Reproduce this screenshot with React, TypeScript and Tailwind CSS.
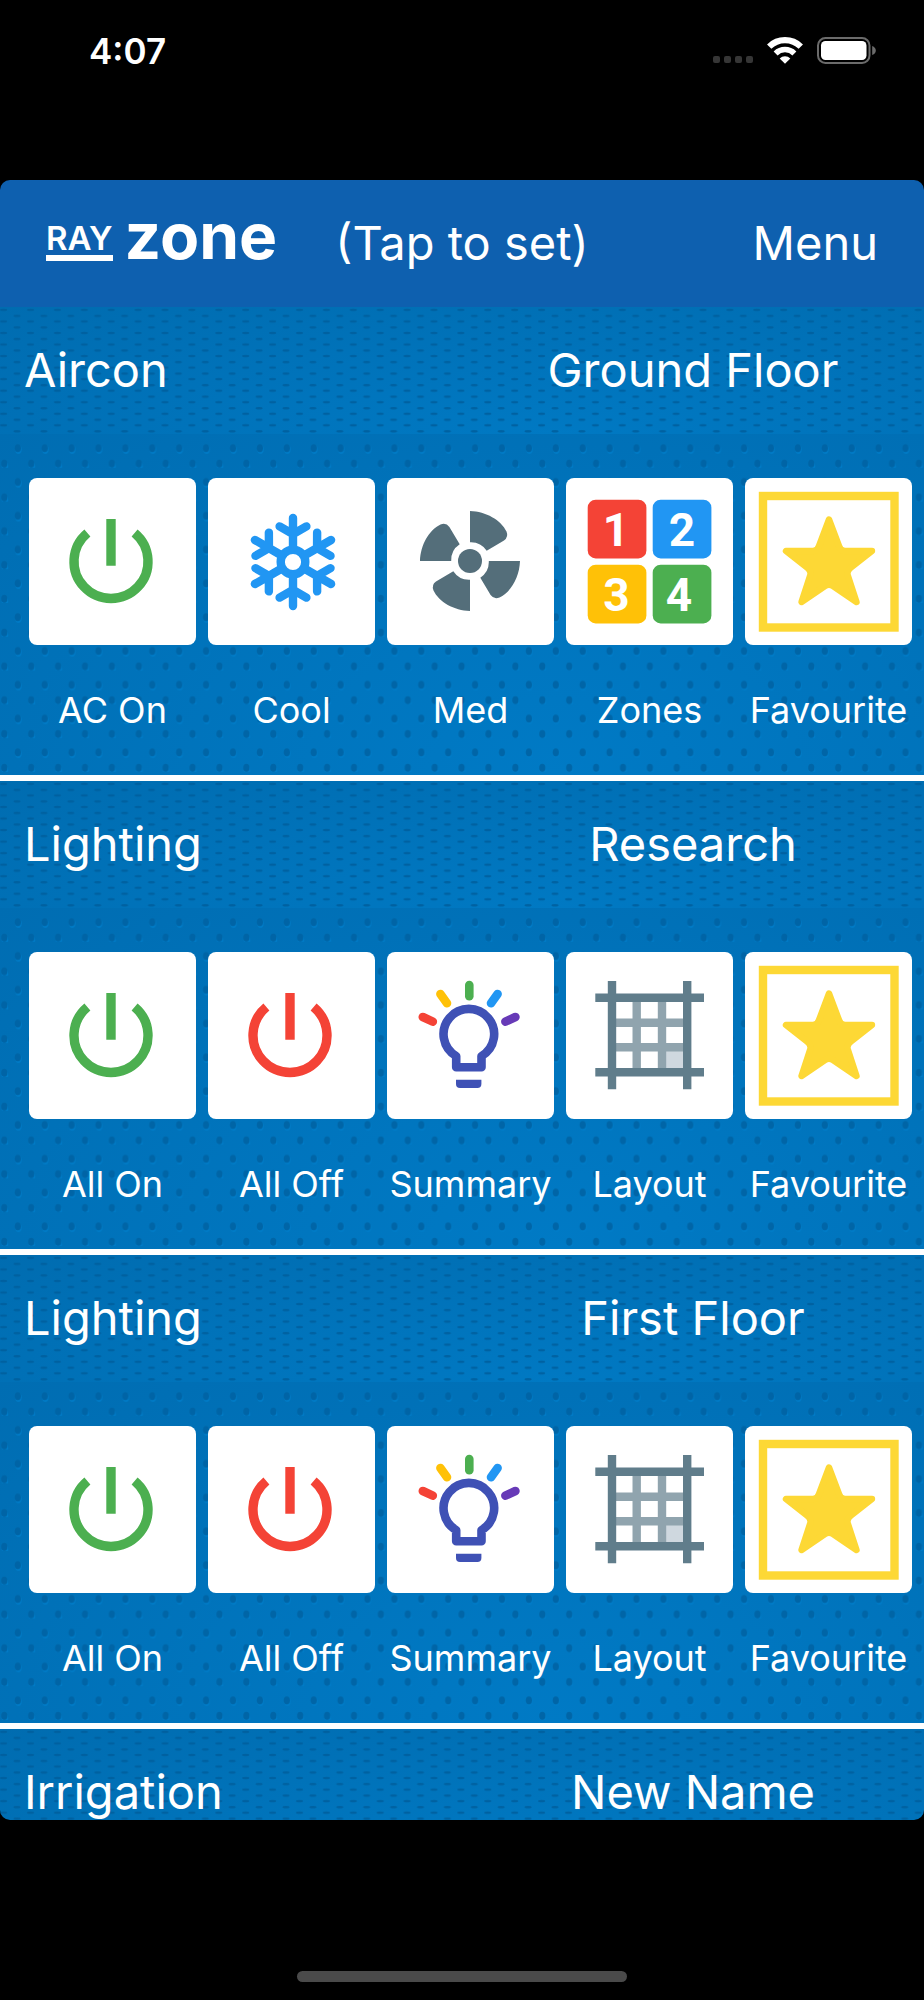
import { useId, type ReactNode } from 'react'

interface Tile {
  label: string
  icon: ReactNode
}

interface Section {
  id: number
  system: string
  room: string
  tiles: Tile[]
}

function PowerIcon({ className }: { className: string }) {
  return (
    <svg viewBox="0 0 167 167" className={className} fill="none" stroke="currentColor" strokeWidth="9.4" aria-hidden="true">
      <path d="M82 41V87.7" />
      <path d="M58.4 55A37 37 0 1 0 105.6 55" />
    </svg>
  )
}

function SnowflakeIcon() {
  return (
    <svg viewBox="0 0 167 167" className="w-full text-[#2196f3]" fill="none" stroke="currentColor" strokeWidth="8.4" strokeLinecap="round" aria-hidden="true">
      <g transform="translate(85 84)">
        <circle r="12.3" />
        {[0, 60, 120, 180, 240, 300].map((angle) => (
          <path key={angle} transform={`rotate(${angle})`} d="M0-14V-44M-13.4-35.6L0-27.8L13.4-35.6" />
        ))}
      </g>
    </svg>
  )
}

function FanIcon() {
  return (
    <svg viewBox="0 0 167 167" className="w-full text-[#546e7a]" fill="currentColor" aria-hidden="true">
      <g transform="translate(83 83)">
        <circle r="12" />
        {[0, 90, 180, 270].map((angle) => (
          <path
            key={angle}
            transform={`rotate(${angle})`}
            d="M0-18.8V-50C16-49.5 31-41 36.5-29.5Q38.8-24 34-20.6L16.7-10.3A19 19 0 0 0 0-18.8Z"
          />
        ))}
      </g>
    </svg>
  )
}

const zones = [
  { n: '1', x: 21.7, y: 21.7, tx: 50, color: '#f44336' },
  { n: '2', x: 86.7, y: 21.7, tx: 116, color: '#2196f3' },
  { n: '3', x: 21.7, y: 86.7, tx: 50.5, color: '#ffc107' },
  { n: '4', x: 86.7, y: 86.7, tx: 113, color: '#4caf50' },
]

function ZonesIcon() {
  return (
    <svg viewBox="0 0 167 167" className="w-full" aria-hidden="true">
      {zones.map((zone) => (
        <g key={zone.n}>
          <rect x={zone.x} y={zone.y} width="58.7" height="58.7" rx="8" fill={zone.color} />
          <text x={zone.tx} y={zone.y + 46} textAnchor="middle" fill="#fff" className="font-['Roboto',sans-serif] text-[46px] font-bold">
            {zone.n}
          </text>
        </g>
      ))}
    </svg>
  )
}

function FavouriteIcon() {
  return (
    <svg viewBox="0 0 167 167" className="w-full text-[#fdd835]" aria-hidden="true">
      <rect x="18" y="18" width="131.5" height="131.5" fill="none" stroke="currentColor" strokeWidth="8.4" />
      <path
        d="M84 41.5L94 68Q95.5 73 100 73H127L106 89.5Q101 93.5 103 98L111.5 124L88 108Q84 105.5 80 108L56.5 124L65 98Q67 93.5 62 89.5L41 73H68Q72.5 73 74 68Z"
        fill="currentColor"
        stroke="currentColor"
        strokeWidth="6.4"
        strokeLinejoin="round"
      />
    </svg>
  )
}

function BulbIcon() {
  return (
    <svg viewBox="0 0 167 167" className="w-full" fill="none" strokeWidth="8.6" strokeLinecap="round" aria-hidden="true">
      <path d="M35.8 65L45.8 69.6" stroke="#f44336" />
      <path d="M53.4 42L60 51.2" stroke="#ffc107" />
      <path d="M82.3 33V44.3" stroke="#4caf50" />
      <path d="M110.6 42L104 51.2" stroke="#2196f3" />
      <path d="M128.4 65L118.4 69.6" stroke="#673ab7" />
      <path d="M69.2 115.2V104.1A25.3 25.3 0 1 1 94.5 104.1V115.2Z" stroke="#3f51b5" strokeLinejoin="round" />
      <path d="M69 127.7H94.4V132A4 4 0 0 1 90.4 136H73A4 4 0 0 1 69 132Z" fill="#3f51b5" />
    </svg>
  )
}

function LayoutIcon() {
  return (
    <svg viewBox="0 0 167 167" className="w-full" fill="none" strokeWidth="8.4" aria-hidden="true">
      <rect x="100" y="99" width="18" height="18" fill="#cfd8df" />
      <path d="M70.7 46V120M96 46V120M46 70.7H121M46 95.3H121" stroke="#90a4ae" />
      <path d="M46 29V137.3M121.2 29V137.3M29.3 45.8H138M29.3 120.3H138" stroke="#607d8b" />
    </svg>
  )
}

const lightingTiles: Tile[] = [
  { label: 'All On', icon: <PowerIcon className="w-full text-[#4caf50]" /> },
  { label: 'All Off', icon: <PowerIcon className="w-full text-[#f44336]" /> },
  { label: 'Summary', icon: <BulbIcon /> },
  { label: 'Layout', icon: <LayoutIcon /> },
  { label: 'Favourite', icon: <FavouriteIcon /> },
]

const sections: Section[] = [
  {
    id: 1,
    system: 'Aircon',
    room: 'Ground Floor',
    tiles: [
      { label: 'AC On', icon: <PowerIcon className="w-full text-[#4caf50]" /> },
      { label: 'Cool', icon: <SnowflakeIcon /> },
      { label: 'Med', icon: <FanIcon /> },
      { label: 'Zones', icon: <ZonesIcon /> },
      { label: 'Favourite', icon: <FavouriteIcon /> },
    ],
  },
  { id: 2, system: 'Lighting', room: 'Research', tiles: lightingTiles },
  { id: 3, system: 'Lighting', room: 'First Floor', tiles: lightingTiles },
  { id: 4, system: 'Irrigation', room: 'New Name', tiles: [] },
]

// Dimpled backdrop. The flat variant is the same dots pressed down for title bars.
function Texture({ flat = false }: { flat?: boolean }) {
  const id = useId()
  return (
    <svg className="absolute inset-0 -z-10 h-full w-full" aria-hidden="true">
      <defs>
        <pattern id={id} width="26.9" height={flat ? 11.54 : 33.8} patternUnits="userSpaceOnUse">
          {flat ? (
            <g fill="#005f9e">
              <ellipse cx="3.6" cy="3" rx="3.6" ry="1.2" />
              <ellipse cx="17" cy="8.8" rx="3.6" ry="1.2" />
            </g>
          ) : (
            <g>
              <ellipse cx="18.4" cy="15.5" rx="3.2" ry="4.4" fill="#007cc8" />
              <ellipse cx="5" cy="32.2" rx="3.2" ry="4.4" fill="#007cc8" />
              <ellipse cx="17.8" cy="14.2" rx="3.1" ry="4" fill="#0063a4" />
              <ellipse cx="4.3" cy="29.6" rx="3.1" ry="4" fill="#0063a4" />
            </g>
          )}
        </pattern>
      </defs>
      <rect width="100%" height="100%" fill={`url(#${id})`} fillOpacity="0.9" />
    </svg>
  )
}

function StatusBar() {
  return (
    <div className="flex h-[180px] shrink-0 items-start justify-between pt-[30px] pr-12 pl-[89px]">
      <time className="text-[35px] leading-[42px] font-semibold">4:07</time>
      <div className="flex items-end gap-[14px] pt-[7px]">
        <div className="flex gap-1 pb-px">
          {[0, 1, 2, 3].map((dot) => (
            <span key={dot} className="size-[7px] rounded-xs bg-[#363636]" />
          ))}
        </div>
        <svg viewBox="0 0 36 27" className="h-[27px] w-9" fill="none" stroke="#fff" aria-label="Wi-Fi">
          <path d="M2.2 9.6A22.6 22.6 0 0 1 33.8 9.6" strokeWidth="6.2" />
          <path d="M8.6 16.4A13.4 13.4 0 0 1 27.4 16.4" strokeWidth="5.6" />
          <path d="M18 26.8L12.7 21.4A7.4 7.4 0 0 1 23.3 21.4Z" fill="#fff" stroke="none" />
        </svg>
        <svg viewBox="0 0 59 27" className="h-[27px] w-[59px]" aria-label="Battery full">
          <rect x="1" y="1" width="51.5" height="25" rx="7.5" fill="none" stroke="#6b6b6b" strokeWidth="2" />
          <rect x="4" y="4" width="45.5" height="19" rx="4.5" fill="#fff" />
          <path d="M55.2 9Q58.8 10.5 58.8 13.5T55.2 18Z" fill="#6b6b6b" />
        </svg>
      </div>
    </div>
  )
}

function Logo() {
  return (
    <a href="#" aria-label="Ray Zone" className="flex items-start gap-3">
      <span className="border-b-[6px] border-white pb-[5px] text-[33px] leading-6 font-semibold">RAY</span>
      <span className="text-[64px] leading-5 font-bold">zone</span>
    </a>
  )
}

function SectionPanel({ section }: { section: Section }) {
  return (
    <section className="shrink-0 border-b-[6px] border-white">
      <div className="relative isolate grid h-[127px] grid-cols-2 items-center bg-[radial-gradient(ellipse_at_60%_100%,#0079c3,#006cb0)] text-[47px]">
        <Texture flat />
        <h2 className="pl-6">{section.system}</h2>
        <p className="text-center">{section.room}</p>
      </div>
      <div className="relative isolate grid min-h-[341px] grid-cols-5 items-start gap-3 bg-[radial-gradient(ellipse_at_60%_100%,#007ac5,#006db2)] pt-11 pr-3 pb-[43px] pl-[29px]">
        <Texture />
        {section.tiles.map((tile) => (
          <button key={tile.label} type="button" className="flex flex-col items-center gap-[43px]">
            <span className="aspect-square w-full overflow-hidden rounded-lg bg-white">{tile.icon}</span>
            <span className="text-4xl leading-11 whitespace-nowrap">{tile.label}</span>
          </button>
        ))}
      </div>
    </section>
  )
}

export default function App() {
  return (
    <div className="flex h-screen flex-col overflow-hidden bg-black font-['Inter',sans-serif] text-white">
      <StatusBar />
      <main className="flex min-h-0 flex-1 flex-col overflow-hidden rounded-[10px]">
        <header className="grid h-[127px] shrink-0 grid-cols-[1fr_auto_1fr] items-center bg-[#0e60af] px-[46px] text-[47px]">
          <Logo />
          <button type="button">(Tap to set)</button>
          <button type="button" className="justify-self-end">Menu</button>
        </header>
        {sections.map((section) => (
          <SectionPanel key={section.id} section={section} />
        ))}
      </main>
      <footer className="flex h-[180px] shrink-0 items-end justify-center pb-[18px]">
        <div className="h-[11px] w-[330px] rounded-full bg-[#4a4a4a]" />
      </footer>
    </div>
  )
}
